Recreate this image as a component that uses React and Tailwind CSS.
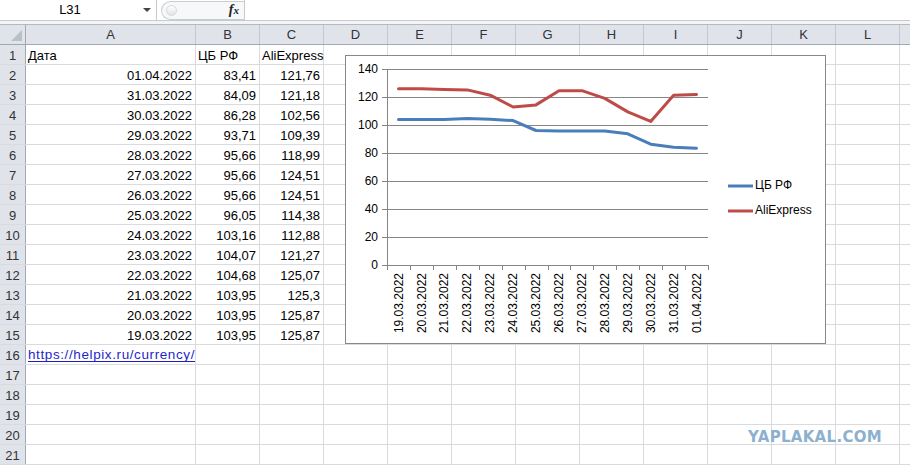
import React from 'react';

const COLS = [
  { key: 'A', cls: 'w-[170px]' },
  { key: 'B', cls: 'w-[64px]' },
  { key: 'C', cls: 'w-[64px]' },
  { key: 'D', cls: 'w-[64px]' },
  { key: 'E', cls: 'w-[64px]' },
  { key: 'F', cls: 'w-[64px]' },
  { key: 'G', cls: 'w-[64px]' },
  { key: 'H', cls: 'w-[64px]' },
  { key: 'I', cls: 'w-[64px]' },
  { key: 'J', cls: 'w-[64px]' },
  { key: 'K', cls: 'w-[64px]' },
  { key: 'L', cls: 'w-[64px]' },
  // only a sliver of M fits, so its letter is left out
  { key: 'M', cls: 'w-[64px]', hidden: true },
];

// date, ЦБ РФ, AliExpress
const ROWS = [
  ['01.04.2022', '83,41', '121,76'],
  ['31.03.2022', '84,09', '121,18'],
  ['30.03.2022', '86,28', '102,56'],
  ['29.03.2022', '93,71', '109,39'],
  ['28.03.2022', '95,66', '118,99'],
  ['27.03.2022', '95,66', '124,51'],
  ['26.03.2022', '95,66', '124,51'],
  ['25.03.2022', '96,05', '114,38'],
  ['24.03.2022', '103,16', '112,88'],
  ['23.03.2022', '104,07', '121,27'],
  ['22.03.2022', '104,68', '125,07'],
  ['21.03.2022', '103,95', '125,3'],
  ['20.03.2022', '103,95', '125,87'],
  ['19.03.2022', '103,95', '125,87'],
];

const num = (s) => parseFloat(s.replace(',', '.'));

function FormulaBar() {
  return (
    <div className="flex h-[21px] border-b border-[#c6c9ce] bg-white">
      <div className="relative flex w-[157px] items-center justify-center border-r border-[#c6c9ce] text-[13px] text-black">
        <span className="-ml-[16px]">L31</span>
        <span className="absolute right-[5px] top-[8px] h-0 w-0 border-x-[4px] border-t-[4px] border-x-transparent border-t-[#444]" />
      </div>
      <div className="flex w-[87px] items-center pl-[4px]">
        <div className="flex h-[19px] w-full items-center justify-between rounded-l-full border border-r-0 border-[#c9ccd1] bg-[#f7f8f9] pl-[4px] pr-[5px]">
          <span className="h-[11px] w-[11px] rounded-full border border-[#d5d8dc] bg-gradient-to-b from-white to-[#e1e4e8]" />
          <span className="font-['Liberation_Serif',serif] text-[14px] font-bold italic leading-none text-[#222]">
            f<span className="text-[11px]">x</span>
          </span>
        </div>
      </div>
      <div className="flex-1 border-l border-[#c6c9ce]" />
    </div>
  );
}

function HeaderRow() {
  return (
    <div className="flex h-[20px] border-b border-[#9fa8b4] bg-[#e0e4ea] text-[13px] text-[#333]">
      <div className="relative w-[26px] shrink-0 border-r border-[#9fa8b4]">
        <svg className="absolute bottom-[3px] right-[3px]" width="11" height="11">
          <polygon points="11,0 11,11 0,11" fill="#b9bfc7" />
        </svg>
      </div>
      {COLS.map((c) => (
        <div key={c.key} className={`${c.cls} flex shrink-0 items-center justify-center border-r border-[#c2c8d0] pt-[1px]`}>
          {c.hidden ? '' : c.key}
        </div>
      ))}
    </div>
  );
}

function Cell({ cls, children, align = 'left', overflow }) {
  return (
    <div
      className={`${cls} flex shrink-0 items-center border-r border-[#d9dbde] pt-[2px] ${
        align === 'right' ? 'justify-end pr-[3px]' : 'pl-[2px]'
      } ${overflow ? 'overflow-visible whitespace-nowrap' : 'overflow-hidden'}`}
    >
      {children}
    </div>
  );
}

function SheetRow({ n, values }) {
  return (
    <div className="flex h-[20px] border-b border-[#d9dbde] text-[13px] text-black">
      <div className="flex w-[26px] shrink-0 items-center justify-center border-r border-[#9fa8b4] bg-[#e0e4ea] pt-[2px] text-[#333]">
        {n}
      </div>
      {COLS.map((c, i) => {
        const v = values[i];
        return (
          <Cell key={c.key} cls={c.cls} align={v?.align} overflow={!!v}>
            {v?.node ?? v?.text ?? ''}
          </Cell>
        );
      })}
    </div>
  );
}

function Chart() {
  const L = 41;
  const R = 362;
  const T = 13;
  const B = 209;
  const k = (B - T) / 140;
  const data = [...ROWS].reverse();
  const step = (R - L) / data.length;
  const cx = (i) => L + step * (i + 0.5);
  const cy = (v) => B - v * k;
  const line = (idx) => data.map((r, i) => `${i ? 'L' : 'M'}${cx(i).toFixed(1)},${cy(num(r[idx])).toFixed(1)}`).join(' ');
  const ticks = [0, 20, 40, 60, 80, 100, 120, 140];

  return (
    <div className="absolute left-[345px] top-[55px] h-[289px] w-[481px] border border-[#888] bg-white">
      <svg width="479" height="287" className="font-['Liberation_Sans',Arial,sans-serif]">
        {ticks.map((t) => (
          <g key={t}>
            <line x1={L - 5} x2={R} y1={cy(t) + 0.5} y2={cy(t) + 0.5} stroke="#868686" strokeWidth="1" />
            <text x={L - 9} y={cy(t) + 0.5} textAnchor="end" dominantBaseline="middle" fontSize="12" fill="#000">
              {t}
            </text>
          </g>
        ))}
        <line x1={L + 0.5} x2={L + 0.5} y1={T} y2={B + 0.5} stroke="#868686" />
        {Array.from({ length: data.length + 1 }, (_, i) => (
          <line key={i} x1={Math.round(L + step * i) + 0.5} x2={Math.round(L + step * i) + 0.5} y1={B} y2={B + 5} stroke="#868686" />
        ))}
        {data.map((r, i) => (
          <text
            key={r[0]}
            transform={`translate(${cx(i) + 1},${B + 8}) rotate(-90)`}
            textAnchor="end"
            dominantBaseline="middle"
            fontSize="12"
            fill="#000"
          >
            {r[0]}
          </text>
        ))}
        <path d={line(1)} fill="none" stroke="#4a7ebb" strokeWidth="3" strokeLinejoin="round" strokeLinecap="round" />
        <path d={line(2)} fill="none" stroke="#be4b48" strokeWidth="3" strokeLinejoin="round" strokeLinecap="round" />

        <line x1="382" x2="407" y1="130" y2="130" stroke="#4a7ebb" strokeWidth="3" />
        <text x="409" y="130" dominantBaseline="middle" fontSize="12" fill="#000">ЦБ РФ</text>
        <line x1="382" x2="407" y1="155" y2="155" stroke="#be4b48" strokeWidth="3" />
        <text x="409" y="155" dominantBaseline="middle" fontSize="12" fill="#000">AliExpress</text>
      </svg>
    </div>
  );
}

export default function App() {
  const body = [];
  body.push([{ text: 'Дата' }, { text: 'ЦБ РФ' }, { text: 'AliExpress' }]);
  ROWS.forEach((r) => body.push(r.map((t) => ({ text: t, align: 'right' }))));
  body.push([
    {
      node: (
        <span className="text-[13.5px] tracking-[0.6px] text-[#1f1fcc] underline decoration-1 underline-offset-2">
          https://helpix.ru/currency/
        </span>
      ),
    },
  ]);
  while (body.length < 21) body.push([]);

  return (
    <div className="relative h-[466px] w-[910px] overflow-hidden bg-white font-['Liberation_Sans',Arial,sans-serif]">
      <FormulaBar />
      <div className="h-[4px] border-b border-[#b5bac1] bg-[#f3f4f6]" />
      <HeaderRow />
      {body.map((vals, i) => (
        <SheetRow key={i} n={i + 1} values={vals} />
      ))}
      <Chart />
      <div className="absolute left-[748px] top-[426px] font-['DejaVu_Sans',sans-serif] text-[15px] font-bold tracking-[0.3px] text-[#8db0cf]">
        YAPLAKAL.COM
      </div>
    </div>
  );
}
